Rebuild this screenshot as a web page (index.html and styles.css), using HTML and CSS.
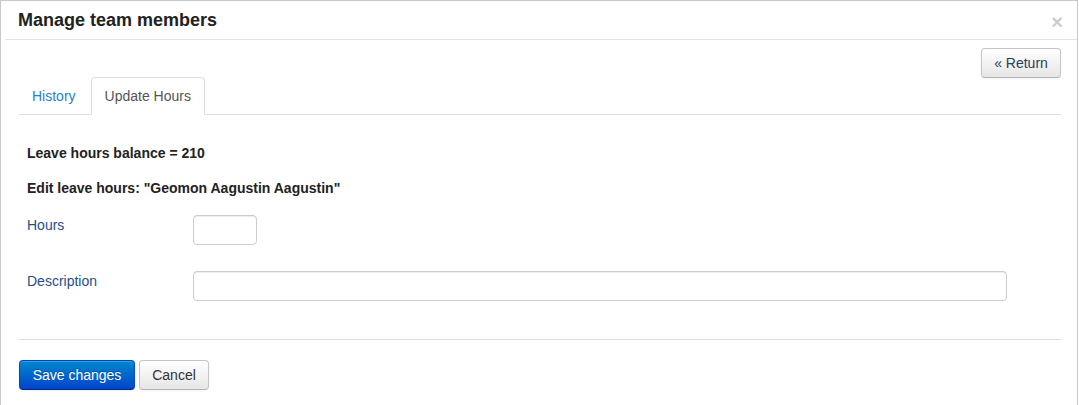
FILE: index.html
```html
<!DOCTYPE html>
<html>
<head>
<meta charset="utf-8">
<link rel="stylesheet" href="styles.css">
</head>
<body>
<div class="modal">
  <div class="modal-header">
    <h3 class="title">Manage team members</h3>
    <span class="close">×</span>
  </div>
  <div class="modal-body">
    <div class="toolbar">
      <button class="btn">« Return</button>
    </div>
    <ul class="tabs">
      <li class="tab"><a>History</a></li>
      <li class="tab active"><a>Update Hours</a></li>
    </ul>
    <div class="tab-content">
      <p class="strong">Leave hours balance = 210</p>
      <p class="strong">Edit leave hours: "Geomon Aagustin Aagustin"</p>
      <div class="row">
        <label class="label">Hours</label>
        <input class="input input-small" type="text">
      </div>
      <div class="row">
        <label class="label">Description</label>
        <input class="input input-wide" type="text">
      </div>
    </div>
  </div>
  <div class="modal-footer">
    <button class="btn btn-primary btn-save">Save changes</button>
    <button class="btn btn-cancel">Cancel</button>
  </div>
</div>
</body>
</html>
```

FILE: styles.css
```css
* { box-sizing: border-box; }
html, body { margin: 0; padding: 0; background: #fff; }
body {
  font-family: "Liberation Sans", Arial, Helvetica, sans-serif;
  font-size: 14px;
  line-height: 20px;
  color: #333;
}
.modal {
  width: 1078px;
  height: 420px;
  border: 1px solid #c8c8c8;
  border-bottom: none;
  padding: 0 0 0 4px;
}
.modal-header {
  display: flex;
  justify-content: space-between;
  align-items: center;
  height: 39px;
  padding: 0 14px 0 14px;
  border-bottom: 1px solid #e5e5e5;
}
.title {
  margin: 0;
  font-size: 18px;
  font-weight: bold;
  color: #222;
  line-height: 24px;
  position: relative;
  left: -1px;
}
.close {
  font-size: 20px;
  font-weight: bold;
  color: #000;
  opacity: 0.2;
  line-height: 20px;
  position: relative;
  top: 2px;
}
.modal-body {
  padding: 8px 16px 0 14px;
}
.toolbar {
  display: flex;
  justify-content: flex-end;
}
.btn {
  font-family: inherit;
  font-size: 14px;
  line-height: 20px;
  height: 30px;
  padding: 4px 0;
  color: #333;
  background: linear-gradient(#ffffff, #e6e6e6);
  border: 1px solid #c5c5c5;
  border-bottom-color: #b3b3b3;
  border-radius: 4px;
  box-shadow: inset 0 1px 0 rgba(255,255,255,.2), 0 1px 2px rgba(0,0,0,.05);
  cursor: pointer;
}
.toolbar .btn { width: 80px; color: #2c3e55; }
.btn-save { width: 116px; }
.btn-cancel { width: 70px; }
.btn-primary {
  color: #fff;
  background: linear-gradient(#0088cc, #0044cc);
  border-color: #0044cc #0044cc #002a80;
  text-shadow: 0 -1px 0 rgba(0,0,0,.25);
}
.tabs {
  list-style: none;
  margin: -1px 0 0 0;
  padding: 0 0 0 1px;
  display: flex;
  border-bottom: 1px solid #ddd;
}
.tab { margin-right: 2px; margin-bottom: -1px; }
.tab a {
  display: block;
  padding: 8px 12px;
  line-height: 20px;
  border: 1px solid transparent;
  border-radius: 4px 4px 0 0;
  color: #2a7fc9;
}
.tab:first-child a { padding-left: 11px; }
.tab.active a {
  color: #555;
  background: #fff;
  padding: 8px 13px;
  border-color: #ddd #ddd transparent;
}
.tab-content {
  padding: 28px 8px 12px 8px;
}
.strong {
  margin: 0 0 15px 0;
  font-weight: bold;
  color: #222;
}
.strong + .strong { margin-bottom: 17px; }
.row {
  display: flex;
  align-items: flex-start;
  height: 56px;
}
.label {
  width: 166px;
  color: #1f4e8c;
}
.input {
  height: 30px;
  border: 1px solid #ccc;
  border-radius: 4px;
  box-shadow: inset 0 1px 1px rgba(0,0,0,.075);
  font-family: inherit;
  font-size: 14px;
  padding: 4px 6px;
}
.input-small { width: 64px; }
.input-wide { width: 814px; }
.modal-footer {
  margin: 0 16px 0 14px;
  padding-top: 20px;
  border-top: 1px solid #ddd;
  display: flex;
  gap: 4px;
}
```
